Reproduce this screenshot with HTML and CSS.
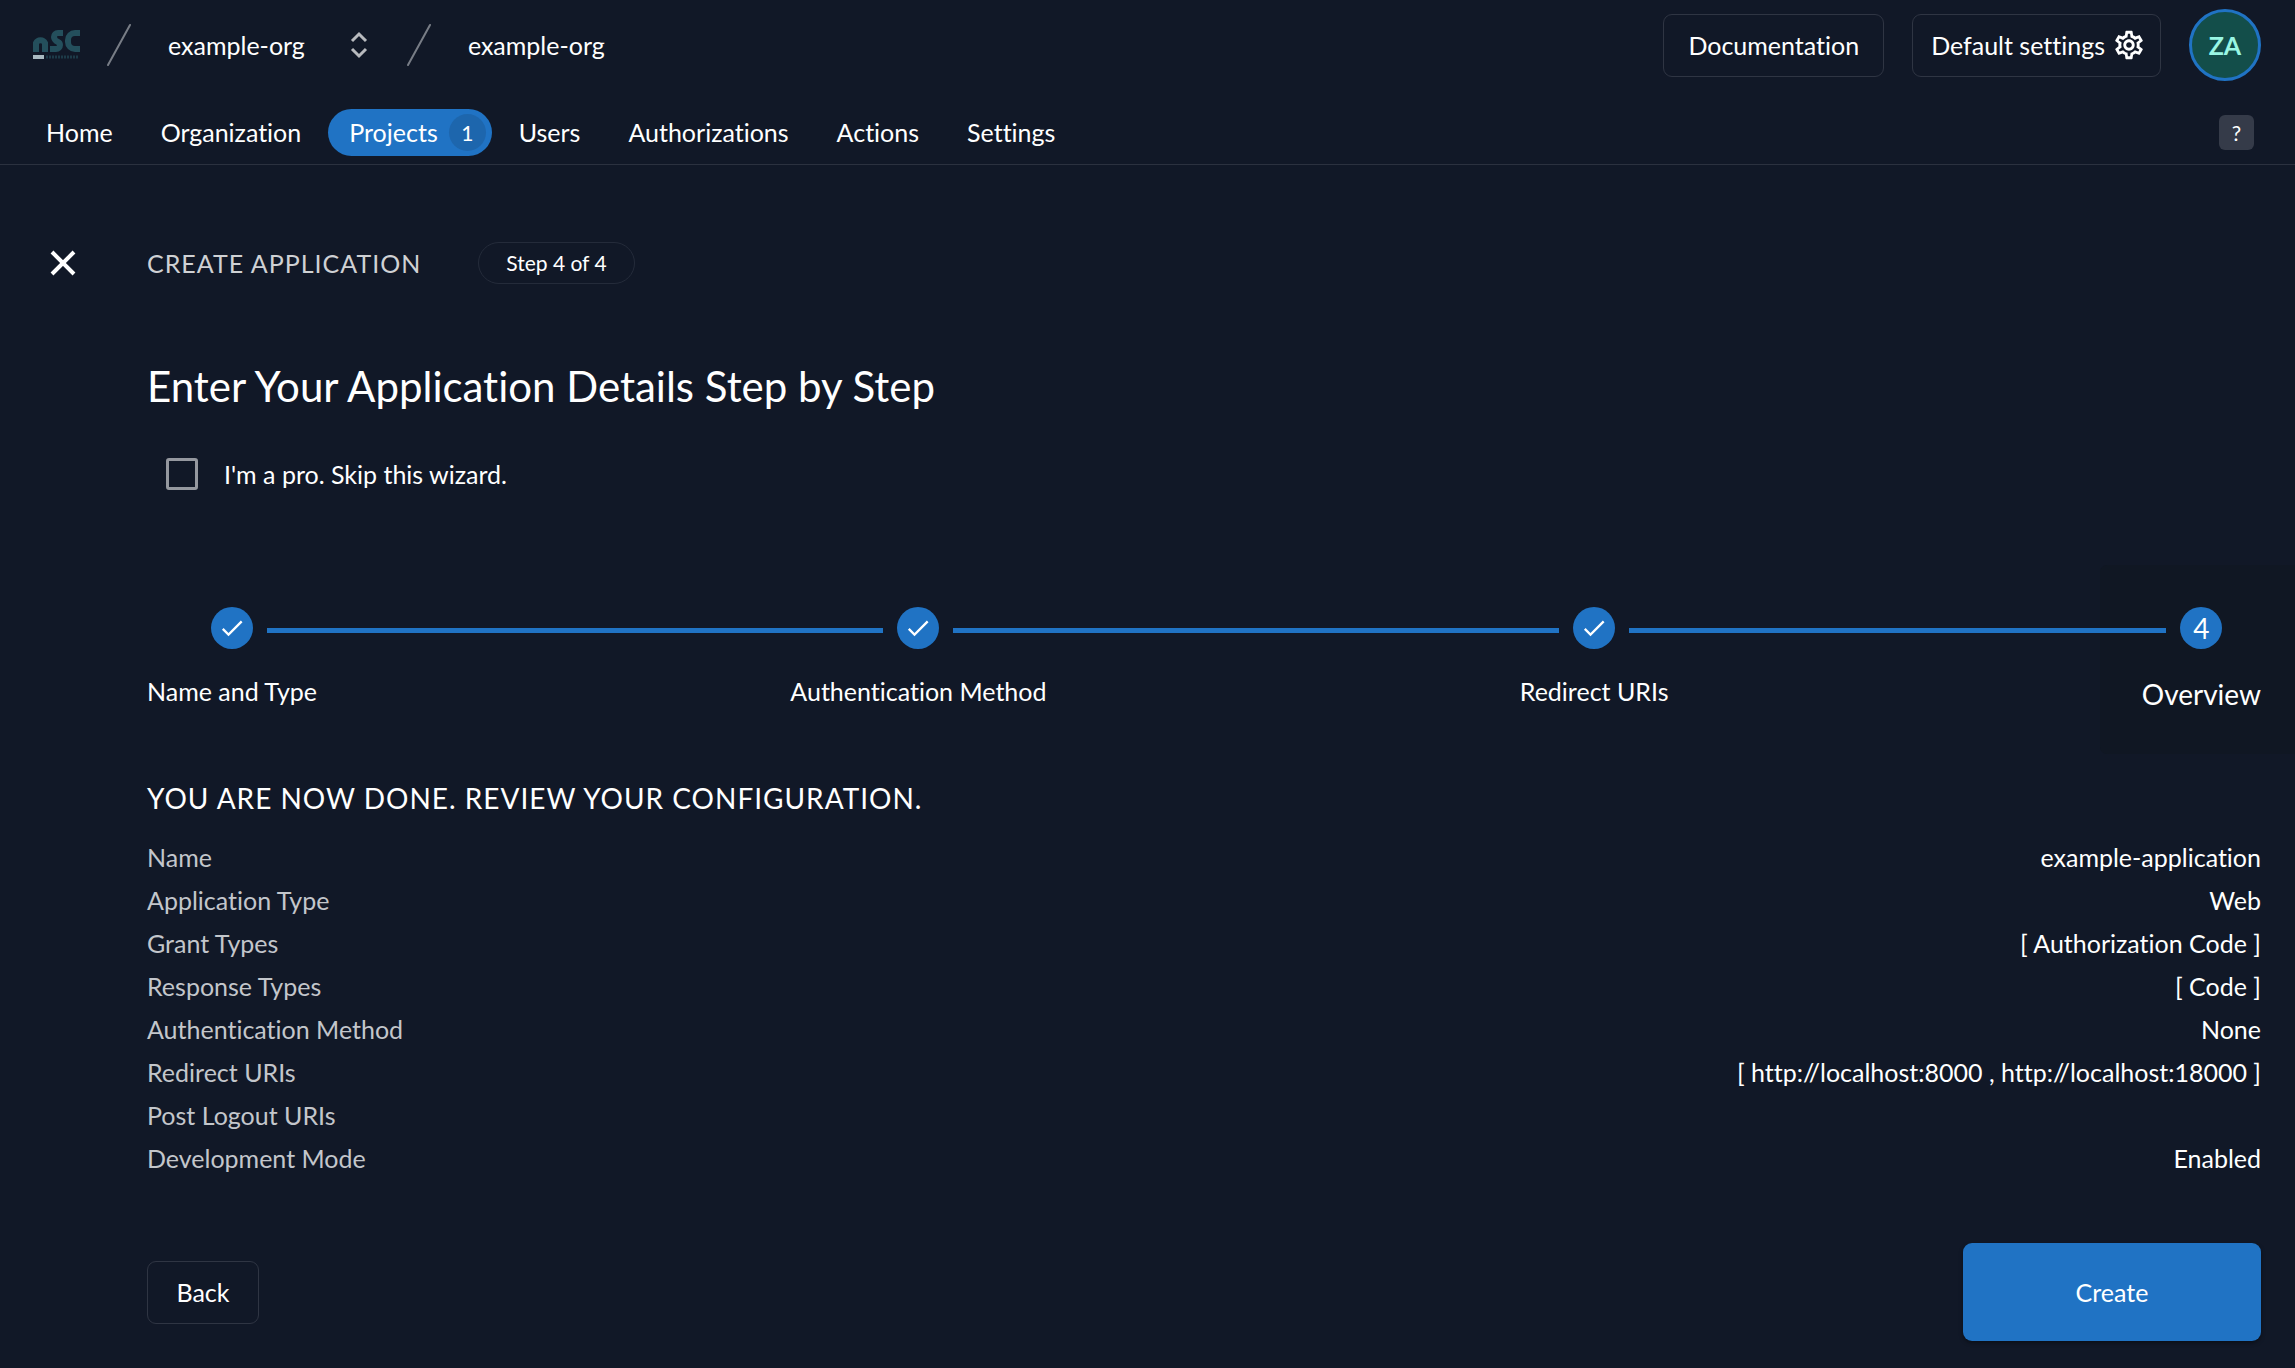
FILE: index.html
```
<!DOCTYPE html>
<html lang="en">
<head>
  <meta charset="UTF-8">
  <meta name="viewport" content="width=device-width, initial-scale=1">
  <title>Create Application</title>
  <link rel="stylesheet" href="styles.css">
</head>
<body>
  <header class="header">
    <div class="topbar">
      <a class="logo" href="#" aria-label="nSC">
        <svg width="48" height="32" viewBox="0 0 48 32">
          <g fill="none" stroke="#244f5c" stroke-width="6">
            <path d="M4 23V14a5 5 0 0 1 9 0v9"/>
            <path d="M31 4h-5a4 4 0 0 0-4 4c0 3 2 4 4 5s2 2 2 3a4 4 0 0 1-4 4h-6"/>
            <path d="M48 4h-5a7 7 0 0 0-7 7v2a7 7 0 0 0 7 7h5"/>
          </g>
          <rect x="1" y="26" width="11" height="4" fill="#a9b9c0"/>
          <path d="M14 28h33" stroke="#1d3a48" stroke-width="3" stroke-dasharray="2 1"/>
        </svg>
      </a>
      <svg class="slash" width="26" height="44" viewBox="0 0 26 44"><path d="M2 42L24 2"/></svg>
      <a class="crumb" href="#">example-org</a>
      <button class="switcher" aria-label="Switch organization">
        <svg width="18" height="28" viewBox="0 0 18 28"><path d="M2 10l7-7 7 7M2 18l7 7 7-7"/></svg>
      </button>
      <svg class="slash" width="26" height="44" viewBox="0 0 26 44"><path d="M2 42L24 2"/></svg>
      <a class="crumb" href="#">example-org</a>
      <div class="actions">
        <a class="btn btn-docs" href="#">Documentation</a>
        <button class="btn btn-settings">Default settings
          <svg width="34" height="34" viewBox="0 0 24 24"><path d="M12 8c-2.210 0-4 1.790-4 4s1.790 4 4 4 4-1.790 4-4-1.790-4-4-4m0 6c-1.100 0-2-.900-2-2s.900-2 2-2 2 .900 2 2-.900 2-2 2m-2 8c-.250 0-.460-.180-.500-.420l-.370-2.650c-.630-.250-1.170-.590-1.690-.990l-2.490 1.010c-.220.080-.490 0-.610-.230l-2-3.460c-.130-.220-.070-.490.120-.640l2.110-1.660L4.500 12l.070-1-2.110-1.630c-.190-.150-.250-.420-.120-.640l2-3.460c.120-.230.390-.320.610-.230l2.490 1c.520-.390 1.060-.730 1.690-.980l.370-2.650c.040-.240.250-.420.500-.420h4c.250 0 .460.180.500.420l.370 2.650c.630.250 1.170.590 1.690.980l2.490-1c.220-.090.490 0 .610.230l2 3.460c.130.220.070.490-.120.640L19.430 11l.070 1-.070 1 2.110 1.630c.190.150.250.420.120.640l-2 3.460c-.120.230-.390.320-.610.230l-2.490-1c-.520.390-1.060.730-1.690.980l-.370 2.650c-.040.240-.250.420-.500.420h-4m1.250-18l-.370 2.610c-1.200.250-2.260.890-3.030 1.780L5.440 7.350l-.750 1.300L6.800 10.200a6.550 6.550 0 0 0 0 3.600l-2.120 1.560.750 1.300 2.430-1.040c.770.880 1.820 1.520 3.010 1.760l.370 2.620h1.520l.370-2.610c1.190-.250 2.240-.890 3.010-1.770l2.430 1.040.750-1.300-2.120-1.550c.400-1.170.400-2.440 0-3.610l2.110-1.550-.750-1.300-2.410 1.040a5.420 5.420 0 0 0-3.030-1.770L12.750 4h-1.500z"/></svg>
        </button>
        <button class="avatar">ZA</button>
      </div>
    </div>
    <nav class="nav">
      <a href="#">Home</a>
      <a href="#">Organization</a>
      <a href="#" class="active">Projects <span class="count">1</span></a>
      <a href="#">Users</a>
      <a href="#">Authorizations</a>
      <a href="#">Actions</a>
      <a href="#">Settings</a>
      <button class="help">?</button>
    </nav>
  </header>

  <main class="page">
    <div class="page-head">
      <button class="close" aria-label="Close">
        <svg width="28" height="28" viewBox="0 0 28 28"><path d="M3 3l22 22M25 3L3 25"/></svg>
      </button>
      <span class="page-title">CREATE APPLICATION</span>
      <span class="step-chip">Step 4 of 4</span>
    </div>

    <div class="content">
      <h1>Enter Your Application Details Step by Step</h1>
      <label class="pro"><input type="checkbox"> I'm a pro. Skip this wizard.</label>

      <div class="stepper">
        <div class="step">
          <div class="marker"><i></i><span class="dot"><svg width="28" height="28" viewBox="0 0 24 24"><path d="M9 16.200L4.800 12l-1.400 1.400L9 19 21 7l-1.400-1.400L9 16.200z"/></svg></span><i></i></div>
          <span class="step-label">Name and Type</span>
        </div>
        <i class="line"></i>
        <div class="step">
          <div class="marker"><i></i><span class="dot"><svg width="28" height="28" viewBox="0 0 24 24"><path d="M9 16.200L4.800 12l-1.400 1.400L9 19 21 7l-1.400-1.400L9 16.200z"/></svg></span><i></i></div>
          <span class="step-label">Authentication Method</span>
        </div>
        <i class="line"></i>
        <div class="step">
          <div class="marker"><i></i><span class="dot"><svg width="28" height="28" viewBox="0 0 24 24"><path d="M9 16.200L4.800 12l-1.400 1.400L9 19 21 7l-1.400-1.400L9 16.200z"/></svg></span><i></i></div>
          <span class="step-label">Redirect URIs</span>
        </div>
        <i class="line"></i>
        <div class="step current">
          <div class="marker"><i></i><span class="dot">4</span><i></i></div>
          <span class="step-label">Overview</span>
        </div>
      </div>

      <h2>YOU ARE NOW DONE. REVIEW YOUR CONFIGURATION.</h2>
      <dl class="review">
        <div class="row"><dt>Name</dt><dd>example-application</dd></div>
        <div class="row"><dt>Application Type</dt><dd>Web</dd></div>
        <div class="row"><dt>Grant Types</dt><dd>[ Authorization Code ]</dd></div>
        <div class="row"><dt>Response Types</dt><dd>[ Code ]</dd></div>
        <div class="row"><dt>Authentication Method</dt><dd>None</dd></div>
        <div class="row"><dt>Redirect URIs</dt><dd>[ http://localhost:8000 , http://localhost:18000 ]</dd></div>
        <div class="row"><dt>Post Logout URIs</dt><dd></dd></div>
        <div class="row"><dt>Development Mode</dt><dd>Enabled</dd></div>
      </dl>

      <div class="buttons">
        <button class="btn btn-back">Back</button>
        <button class="btn btn-create">Create</button>
      </div>
    </div>
  </main>
</body>
</html>
```
FILE: styles.css
```
* {
  box-sizing: border-box;
}
body {
  margin: 0;
  background-color: #111827;
  color: #fff;
  font-family: Lato, sans-serif;
  font-size: 25px;
  font-variant-ligatures: none;
  line-height: 36px;
}
a {
  color: inherit;
  text-decoration: none;
}
button {
  font: inherit;
  font-variant-ligatures: none;
  color: inherit;
  background: none;
  border: none;
  padding: 0;
  cursor: pointer;
}
svg {
  display: block;
  flex: none;
}

/* header */
.header {
  border-bottom: 1px solid #2b313f;
}
.topbar {
  display: flex;
  align-items: center;
  height: 90px;
  padding: 0 34px 0 32px;
}
.logo {
  margin-right: 26px;
}
.slash {
  fill: none;
  stroke: #787d86;
  stroke-width: 2;
  stroke-linecap: round;
}
.crumb {
  margin-left: 36px;
}
.switcher {
  margin: 0 38px 0 45px;
}
.switcher svg {
  fill: none;
  stroke: #b8babe;
  stroke-width: 3;
}
.actions {
  display: flex;
  align-items: center;
  gap: 28px;
  margin-left: auto;
}
.btn {
  display: flex;
  align-items: center;
  justify-content: center;
  height: 63px;
  border: 1px solid #2f3543;
  border-radius: 9px;
}
.btn-docs {
  padding: 0 24px;
}
.btn-settings {
  gap: 7px;
  padding: 0 14px 0 18px;
}
.btn-settings svg {
  fill: #fff;
}
.avatar {
  width: 72px;
  height: 72px;
  border: 3px solid #2073c4;
  border-radius: 50%;
  background-color: #134e4a;
  color: #99f6e4;
  font-weight: bold;
}
.nav {
  display: flex;
  align-items: center;
  gap: 6px;
  height: 74px;
  padding: 10px 41px 0 25px;
}
.nav a {
  display: flex;
  align-items: center;
  height: 47px;
  padding: 0 21px;
  border-radius: 24px;
}
.nav .active {
  gap: 11px;
  padding-right: 6px;
  background-color: #2073c4;
}
.count {
  width: 37px;
  border-radius: 50%;
  background-color: #1d66ad;
  font-size: 21px;
  line-height: 37px;
  text-align: center;
}
.help {
  width: 35px;
  height: 35px;
  margin-left: auto;
  border-radius: 6px;
  background-color: #353b49;
  font-size: 21px;
  line-height: 35px;
}

/* page */
.page {
  padding: 77px 34px 26px 49px;
}
.page-head {
  display: flex;
  align-items: center;
}
.close {
  margin-right: 70px;
}
.close svg {
  fill: none;
  stroke: #fff;
  stroke-width: 4;
}
.page-title {
  color: #cfd1d4;
  letter-spacing: 1px;
}
.step-chip {
  margin-left: 57px;
  padding: 0 27px;
  border: 1px solid #242b3a;
  border-radius: 21px;
  font-size: 21px;
  line-height: 40px;
}
.content {
  padding-left: 98px;
}
h1 {
  margin: 76px 0 32px;
  font-size: 42px;
  font-weight: normal;
  line-height: 52px;
}
.pro {
  display: flex;
  align-items: center;
  gap: 26px;
  width: max-content;
  height: 60px;
  padding-left: 19px;
}
.pro input {
  appearance: none;
  width: 32px;
  height: 32px;
  margin: 0;
  border: 3px solid #95989f;
  border-radius: 3px;
}

/* stepper */
.stepper {
  display: flex;
  align-items: flex-start;
  margin: 103px 0 68px;
}
.marker {
  display: flex;
  align-items: center;
  gap: 14px;
}
.marker i {
  flex: 1;
}
.marker i,
.line {
  height: 5px;
  margin-top: 5px;
  background-color: #2073c4;
}
.line {
  flex: 1;
  z-index: 1;
  margin-top: 21px;
}
.step:first-child i:first-child,
.step:last-child i:last-child {
  background: none;
}
.dot {
  display: flex;
  align-items: center;
  justify-content: center;
  width: 42px;
  height: 42px;
  border-radius: 50%;
  background-color: #2073c4;
}
.dot svg {
  fill: #fff;
}
.step-label {
  display: block;
  margin-top: 24px;
}
/* highlight reaches out to the window edge */
.current {
  margin: -42px -34px -42px -42px;
  padding: 42px 34px 42px 42px;
  border-radius: 7px 0 0 7px;
  background-color: #101723;
  font-size: 28px;
}
.current .step-label {
  margin-top: 27px;
}

/* review */
h2 {
  margin: 0 0 20px;
  font-size: 28px;
  font-weight: normal;
  letter-spacing: 1px;
}
.review {
  margin: 0;
}
.row {
  display: flex;
  justify-content: space-between;
  line-height: 43px;
}
dt {
  color: #c3c6cb;
}
dd {
  margin: 0;
}
.buttons {
  display: flex;
  align-items: center;
  justify-content: space-between;
  margin-top: 63px;
}
.btn-back {
  width: 112px;
}
.btn-create {
  width: 298px;
  height: 98px;
  border: none;
  background-color: #2073c4;
  box-shadow: 0 2px 4px rgba(0, 0, 0, 0.4);
}
```
